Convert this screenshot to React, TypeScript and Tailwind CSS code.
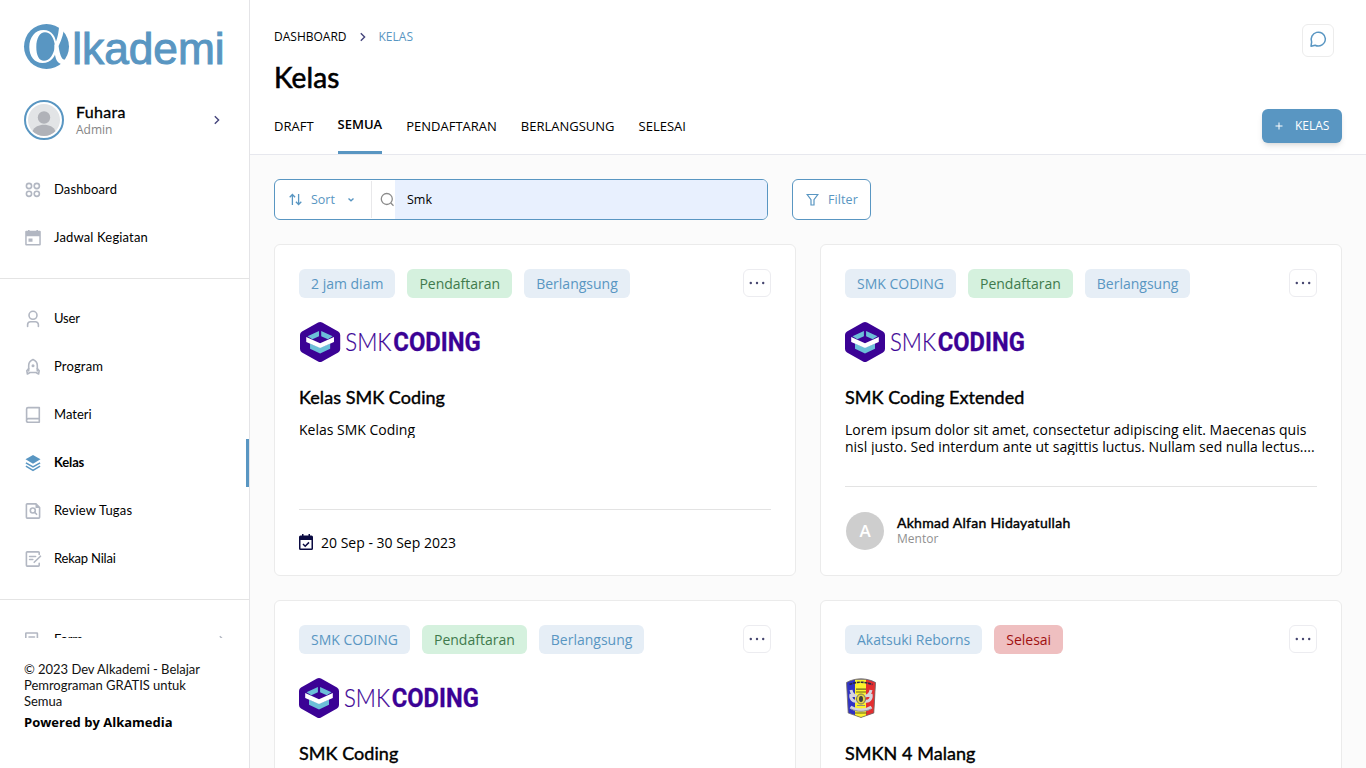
import React from "react";

const display = "font-['Lato',sans-serif]";

type IconProps = { className?: string };

const line = {
  fill: "none",
  stroke: "currentColor",
  strokeWidth: 1.6,
  strokeLinecap: "round" as const,
  strokeLinejoin: "round" as const,
};

function Svg16({ children, className }: { children: React.ReactNode; className?: string }) {
  return (
    <svg width="18" height="18" viewBox="0 0 18 18" className={className ?? "shrink-0"}>
      {children}
    </svg>
  );
}

const DashboardIcon = () => (
  <Svg16>
    <g {...line}>
      <circle cx="5" cy="5" r="2.6" />
      <circle cx="12.8" cy="5" r="2.6" />
      <circle cx="5" cy="12.8" r="2.6" />
      <circle cx="12.8" cy="12.8" r="2.6" />
    </g>
  </Svg16>
);

const CalendarIcon = () => (
  <Svg16>
    <path
      fill="currentColor"
      fillRule="evenodd"
      d="M1.2 2.8a1 1 0 0 1 1-1H4V1h1.6v.8h6.8V1H14v.8h1.8a1 1 0 0 1 1 1v12.7a1 1 0 0 1-1 1H2.200a1 1 0 0 1-1-1zM2.700 7.200v7.800h12.600v-7.800zM4.500 9.600h4v3.200h-4z"
    />
  </Svg16>
);

const UserIcon = () => (
  <Svg16>
    <g {...line}>
      <circle cx="9" cy="5.300" r="4" />
      <path d="M3.600 16.500v-1.700a3 3 0 0 1 3-3h4.800a3 3 0 0 1 3 3v1.700" />
    </g>
  </Svg16>
);

const RocketIcon = () => (
  <Svg16>
    <g {...line}>
      <path d="M4.700 13V7.500C4.700 4.600 6.600 2.500 9 1.500c2.400 1 4.300 3.100 4.300 6V13" />
      <path d="M4.700 10.600 2.800 12.700l.6 3.300 2.600-1.500h6l2.600 1.500.6-3.300-1.900-2.100" />
    </g>
    <circle cx="9" cy="7.700" r="1.500" fill="currentColor" />
  </Svg16>
);

const BookIcon = () => (
  <Svg16>
    <g {...line}>
      <path d="M2.600 14.300V3a1.400 1.400 0 0 1 1.400-1.400h11.300v14.600H4.300a1.800 1.800 0 0 1 0-3.600h11" />
    </g>
  </Svg16>
);

const LayersIcon = () => (
  <Svg16>
    <path d="M9 .9 16.500 5.300 9 9.700 1.500 5.300z" fill="currentColor" />
    <path d="M1.900 8.800 9 13l7.100-4.200M1.900 12.100 9 16.300l7.100-4.200" fill="none" stroke="currentColor" strokeWidth="1.500" />
  </Svg16>
);

const ReviewIcon = () => (
  <Svg16>
    <g {...line}>
      <path d="M12 1.900H3.200a.8.800 0 0 0-.8.8v12.600a.8.800 0 0 0 .8.8h11.600a.8.800 0 0 0 .8-.8V5.500z" />
      <circle cx="8.800" cy="8.500" r="2.500" />
      <path d="m10.700 10.400 1.900 1.900" />
    </g>
    <path d="M11.500 1.500v4.500h4.500z" fill="currentColor" />
  </Svg16>
);

const RecapIcon = () => (
  <Svg16>
    <g {...line}>
      <path d="M15.200 4.500V2.700a.8.800 0 0 0-.8-.8H3.200a.8.800 0 0 0-.8.8v12.600a.8.800 0 0 0 .8.8h11.200a.8.800 0 0 0 .8-.8v-2" />
      <path d="M5.600 6.500h6M5.600 9.500h3.200M10.200 12.300l6.300-6.100" />
    </g>
  </Svg16>
);

const FormIcon = () => (
  <Svg16>
    <g {...line}>
      <rect x="1.800" y="2" width="11.600" height="13.500" rx=".5" />
      <path d="M5 6h5.500M5 9h5.500" />
    </g>
  </Svg16>
);

function Chevron({ className }: IconProps) {
  return (
    <svg width="8" height="12" viewBox="0 0 8 12" className={className}>
      <path d="m1.800 2.200 3.800 3.800-3.800 3.800" fill="none" stroke="currentColor" strokeWidth="1.400" />
    </svg>
  );
}

function BrandLogo() {
  return (
    <svg width="202" height="46" viewBox="0 0 202 46" className="block overflow-visible">
      <circle cx="22.500" cy="22.500" r="22.500" fill="#5996c2" />
      <path
        fill="#fff"
        fillRule="evenodd"
        d="M19.500 6C28 6 32.500 13 32.500 22.500S27.500 39 18.500 39C10.500 39 5.300 32.500 5.300 23S11 6 19.500 6zM21 8.300c-5.200 0-8.700 6-8.700 14.700 0 8.500 2.700 13.800 7.700 13.800 5.500 0 9.800-6 11-14.800C30 13.500 26.500 8.300 21 8.300z"
      />
      <path
        fill="#fff"
        d="M35.300 0H40.500C40 8.500 38 15 34.600 22c.7 6 2.200 11.200 4.200 13 1.500 1.300 3 .8 4.500-.5L44 38l-6 2.200c-4.500-1-6.500-4.700-7.300-11.200l-.4-7.500C33.200 15.500 34.800 9 35.300 0z"
      />
      <text x="48.200" y="39.800" textLength="152.500" lengthAdjust="spacingAndGlyphs" fill="#5996c2" stroke="#5996c2" strokeWidth="1" className="font-['Liberation_Sans',sans-serif] text-[43.500px]">
        lkademi
      </text>
    </svg>
  );
}

function SmkLogo({ wide }: { wide?: boolean }) {
  return (
    <svg width={wide ? 181 : 180} height="40" viewBox="0 0 180 40" preserveAspectRatio="none" className={wide ? "ml-px block overflow-visible" : "block overflow-visible"}>
      <path d="M18 .6a4 4 0 0 1 4 0l16 9a4 4 0 0 1 2 3.500v14a4 4 0 0 1-2 3.500l-16 8.900a4 4 0 0 1-4 0l-16-8.900a4 4 0 0 1-2-3.500v-14a4 4 0 0 1 2-3.500z" fill="#3b0295" />
      <path d="M7.500 14.200 18.900 9v5.200L12.300 17.300zM32.500 14.200 21.100 9v5.200l6.600 3.100zM10 21.500l10 4 10-4v5.200L20 31.500l-10-4.800z" fill="#6cbfd8" />
      <path d="M6.200 15 20 21.200 33.800 15v5L20 26 6.200 20z" fill="#fff" />
      <text x="45" y="28.800" textLength="46" lengthAdjust="spacingAndGlyphs" fill="#3b0295" stroke="#3b0295" strokeWidth=".2" className="font-['Lato',sans-serif] text-[24.500px] font-light">
        SMK
      </text>
      <text x="92.800" y="28.800" textLength="87" lengthAdjust="spacingAndGlyphs" fill="#3b0295" stroke="#3b0295" strokeWidth=".3" className="font-['Roboto',sans-serif] text-[25px] font-bold">
        CODING
      </text>
    </svg>
  );
}

function SchoolCrest() {
  return (
    <svg width="32" height="40" viewBox="0 0 32 40" className="block">
      <path d="M1.500 4.500C6 2 11 .8 16 .8S26 2 30.500 4.500L28.800 35C24.500 36.500 20 38 16 39.500 12 38 7.500 36.500 3.200 35z" fill="#3033c4" />
      <path d="M10 1.500h11v36.200l-5 1.800-6-2z" fill="#fbf22d" />
      <path d="M21 1.500c3.300.6 6.500 1.600 9.500 3L28.800 35 21 37.700z" fill="#e42e30" />
      <path d="M4.500 6.500c7.500-3 15.500-3 23 0" fill="none" stroke="#292b45" strokeWidth="1.600" strokeDasharray="3 .8" />
      <path d="M6 12c1 5 3 6 6 6M26 12c-1 5-3 6-6 6M6 16c-1 5 2 8 6 7M26 16c1 5-2 8-6 7M5.500 29c6 4 15 4 21 0" fill="none" stroke="#d5d4dc" strokeWidth="3" />
      <path d="M11 11.200h10M11 14h10M10 35h12" stroke="#686321" strokeWidth="1.200" />
      <ellipse cx="16" cy="21" rx="4.500" ry="5" fill="#e4d546" stroke="#77745a" />
      <ellipse cx="16" cy="21" rx="2" ry="3" fill="#3d3f42" />
      <path d="M12 27.500h8M6 31c6 3 14 3 20 0" fill="none" stroke="#85838a" strokeWidth=".9" />
      <path d="M1.500 4.500C6 2 11 .8 16 .8S26 2 30.500 4.500L28.800 35C24.500 36.500 20 38 16 39.500 12 38 7.500 36.500 3.200 35z" fill="none" stroke="#777066" strokeWidth=".8" />
    </svg>
  );
}

function NavItem({ icon, label, spacing, active, arrow }: { icon: React.ReactNode; label: string; spacing: string; active?: boolean; arrow?: boolean }) {
  return (
    <a
      className={
        "flex h-12 shrink-0 items-center border-r-[3px] pl-6 " +
        (active ? "border-[#5996c2] text-[#5996c2]" : "border-transparent text-[#b2b7c2]")
      }
    >
      {icon}
      <span className={`ml-3 text-[13px] whitespace-nowrap text-black ${display} ${spacing} ${active ? "font-bold" : ""}`}>{label}</span>
      {arrow && <Chevron className="mr-[20px] ml-auto" />}
    </a>
  );
}

function Sidebar() {
  return (
    <aside className="flex h-full w-[250px] shrink-0 flex-col border-r border-[#e4e4e7] bg-white">
      <div className="h-[100px] shrink-0 pt-6 pl-6">
        <BrandLogo />
      </div>
      <div className="flex h-10 shrink-0 items-center pl-6">
        <svg width="40" height="40" viewBox="0 0 40 40" className="shrink-0">
          <circle cx="20" cy="20" r="19" fill="#fff" stroke="#5996c2" strokeWidth="2" />
          <circle cx="20" cy="20" r="16" fill="#e2e4e6" />
          <circle cx="20" cy="17.500" r="6.200" fill="#b0b2b8" />
          <path d="M8.600 31.200c3-8.500 19.800-8.500 22.800 0a16 16 0 0 1-22.800 0z" fill="#b0b2b8" />
        </svg>
        <div className="ml-3 pt-px">
          <div className={`text-[16px] leading-4 tracking-[0.3px] [-webkit-text-stroke:0.3px] ${display}`}>Fuhara</div>
          <div className="pt-[2px] text-[12px] leading-[16px] text-[#858585]">Admin</div>
        </div>
        <Chevron className="mr-[28px] ml-auto text-[#45457c]" />
      </div>
      <nav className="mt-[26px] flex h-[472px] shrink-0 flex-col overflow-hidden">
        <NavItem icon={<DashboardIcon />} label="Dashboard" spacing="tracking-[0.13px]" />
        <NavItem icon={<CalendarIcon />} label="Jadwal Kegiatan" spacing="tracking-[0.16px]" />
        <div className="mt-4 mb-4 h-px shrink-0 bg-[#e4e4e4]" />
        <NavItem icon={<UserIcon />} label="User" spacing="tracking-[-0.2px]" />
        <NavItem icon={<RocketIcon />} label="Program" spacing="tracking-[0.15px]" />
        <NavItem icon={<BookIcon />} label="Materi" spacing="tracking-[0px]" />
        <NavItem icon={<LayersIcon />} label="Kelas" spacing="tracking-[-0.15px]" active />
        <NavItem icon={<ReviewIcon />} label="Review Tugas" spacing="tracking-[0.15px]" />
        <NavItem icon={<RecapIcon />} label="Rekap Nilai" spacing="tracking-[-0.2px]" />
        <div className="mt-4 mb-4 h-px shrink-0 bg-[#e4e4e4]" />
        <NavItem icon={<FormIcon />} label="Form" spacing="tracking-[-0.2px]" arrow />
      </nav>
      <footer className="px-6 pt-[23px]">
        <p className={`text-[13px] leading-4 tracking-[-0.03px] text-[#111] ${display}`}>
          © 2023 Dev Alkademi - Belajar
          <br />
          Pemrograman GRATIS untuk
          <br />
          Semua
        </p>
        <p className="mt-[5px] text-[13px] leading-4 font-bold whitespace-nowrap">Powered by Alkamedia</p>
      </footer>
    </aside>
  );
}

function Header() {
  const tab = "flex items-center";
  return (
    <header className="flex h-[155px] shrink-0 justify-between border-b border-[#e7e8ee] bg-white pr-6 pl-6">
      <div className="flex flex-col">
        <div className="mt-[29px] flex h-4 items-center text-[12px]">
          <span>DASHBOARD</span>
          <Chevron className="mx-3 text-[#45457c]" />
          <span className="text-[#5996c2]">KELAS</span>
        </div>
        <h1 className={`mt-[14px] h-9 text-[28px] leading-9 tracking-[0.1px] [-webkit-text-stroke:0.6px] ${display}`}>Kelas</h1>
        <div className="mt-[5px] flex h-[54px] gap-6 text-[13px]">
          <a className={tab}>DRAFT</a>
          <a className="flex items-center border-b-[3px] border-[#5996c2] pb-px font-semibold">SEMUA</a>
          <a className={tab}>PENDAFTARAN</a>
          <a className={tab}>BERLANGSUNG</a>
          <a className={tab}>SELESAI</a>
        </div>
      </div>
      <div className="flex flex-col items-end">
        <button className="mt-6 mr-2 flex h-[33px] w-8 justify-center rounded-md border border-[#ececec] pt-[5px]">
          <svg width="18" height="18" viewBox="0 0 24 24">
            <path
              d="M21.800 11.500a9.500 9.700 0 0 1-13.600 8.800L2.700 21.600 3.500 16.100A9.500 9.700 0 1 1 21.800 11.500z"
              fill="none"
              stroke="#5996c2"
              strokeWidth="2"
              strokeLinejoin="round"
            />
          </svg>
        </button>
        <button className="mt-[52px] flex h-[34px] w-20 items-center rounded-md bg-[#5996c2] pl-[13px] text-[12px] text-white shadow-md">
          <svg width="8" height="8" viewBox="0 0 8 8" className="mr-3">
            <path d="M4 .5v7M.5 4h7" stroke="#fff" strokeWidth="1" />
          </svg>
          KELAS
        </button>
      </div>
    </header>
  );
}

function Toolbar() {
  return (
    <div className="flex h-[41px] gap-6 text-[12.500px] leading-5 text-[#5996c2]">
      <div className="flex w-[494px] overflow-hidden rounded-md border border-[#5996c2] bg-white">
        <div className="my-px flex w-[97px] items-center border-r border-[#e8e8ea] pl-[14px]">
          <svg width="13" height="13" viewBox="0 0 13 13" className="mr-[9px]">
            <path d="M3.400 12V1.500M.7 4.200l2.700-2.700 2.700 2.700M9.600 1v10.500M6.900 8.800l2.700 2.700 2.700-2.700" fill="none" stroke="currentColor" strokeWidth="1.300" />
          </svg>
          <span className="pt-px">Sort</span>
          <svg width="8" height="6" viewBox="0 0 8 6" className="ml-3">
            <path d="m1.500 1.500 2.500 2.300 2.500-2.300" fill="none" stroke="currentColor" strokeWidth="1.400" />
          </svg>
        </div>
        <div className="flex w-[23px] items-center pl-2">
          <svg width="15" height="15" viewBox="0 0 15 15" className="shrink-0">
            <circle cx="6.800" cy="7" r="5.500" fill="none" stroke="#8b8b8b" strokeWidth="1.300" />
            <path d="m10.800 11 2.700 2.700" stroke="#8b8b8b" strokeWidth="1.300" />
          </svg>
        </div>
        <div className="flex flex-1 items-center bg-[#e8f0fe] pt-px pl-3 text-black">Smk</div>
      </div>
      <button className="flex w-[79px] items-center rounded-md border border-[#5996c2] bg-white pl-[13px]">
        <svg width="13" height="13" viewBox="0 0 13 13" className="mr-[9px]">
          <path d="M1.200 1.500h10.600L8 6.700V12H5V6.700z" fill="none" stroke="currentColor" strokeWidth="1.200" />
        </svg>
        <span className="pt-px tracking-[0.1px]">Filter</span>
      </button>
    </div>
  );
}

const tones = {
  blue: "bg-[#e6eef6] text-[#5996c2]",
  green: "bg-[#d5f1de] text-[#3f7a4c]",
  red: "bg-[#efbfc0] text-[#a01010]",
};

type Card = {
  tags: [string, keyof typeof tones][];
  logo: React.ReactNode;
  title: string;
  desc?: React.ReactNode;
  footer?: React.ReactNode;
};

function ClassCard({ tags, logo, title, desc, footer }: Card) {
  return (
    <article className="flex h-[332px] flex-col rounded-md border border-[#ebebeb] bg-white p-6">
      <div className="flex items-start justify-between">
        <div className="flex gap-3">
          {tags.map(([label, tone]) => (
            <span key={label} className={`h-[29px] rounded-md px-3 text-[14px] leading-[29px] whitespace-nowrap ${tones[tone]}`}>
              {label}
            </span>
          ))}
        </div>
        <button className="flex h-7 w-7 items-center justify-center rounded-md border border-[#ececf0]">
          <svg width="16" height="4" viewBox="0 0 16 4" fill="#46466f">
            <circle cx="1.800" cy="2" r="1.200" />
            <circle cx="8" cy="2" r="1.200" />
            <circle cx="14.200" cy="2" r="1.200" />
          </svg>
        </button>
      </div>
      <div className="mt-6 h-10">{logo}</div>
      <h2 className={`mt-[23px] text-[18px] leading-6 tracking-[0.05px] [-webkit-text-stroke:0.4px] ${display}`}>{title}</h2>
      <div className="mt-3 overflow-hidden text-[14px] leading-[17px] whitespace-nowrap">{desc}</div>
      {footer && <div className="mt-auto border-t border-[#e3e3e3] pt-6">{footer}</div>}
    </article>
  );
}

const cards: Card[] = [
  {
    tags: [["2 jam diam", "blue"], ["Pendaftaran", "green"], ["Berlangsung", "blue"]],
    logo: <SmkLogo wide />,
    title: "Kelas SMK Coding",
    desc: "Kelas SMK Coding",
    footer: (
      <div className="flex h-[17px] items-center text-[14px]">
        <svg width="14" height="16" viewBox="0 0 14 16" className="mr-2 mb-px">
          <path
            fill="#0b0b42"
            fillRule="evenodd"
            d="M3 0h1.500v1.500h5V0H11v1.500h1.500A1.500 1.500 0 0 1 14 3v11.500a1.500 1.500 0 0 1-1.500 1.500h-11A1.500 1.500 0 0 1 0 14.500V3a1.500 1.500 0 0 1 1.500-1.500H3zM1.500 6v8.500h11V6z"
          />
          <path d="m4 10 2.200 2.200L10 8.400" fill="none" stroke="#0b0b42" strokeWidth="1.500" />
        </svg>
        20 Sep - 30 Sep 2023
      </div>
    ),
  },
  {
    tags: [["SMK CODING", "blue"], ["Pendaftaran", "green"], ["Berlangsung", "blue"]],
    logo: <SmkLogo />,
    title: "SMK Coding Extended",
    desc: (
      <>
        Lorem ipsum dolor sit amet, consectetur adipiscing elit. Maecenas quis
        <br />
        nisl justo. Sed interdum ante ut sagittis luctus. Nullam sed nulla lectus....
      </>
    ),
    footer: (
      <div className="flex h-10 items-center">
        <div className="ml-px flex h-[38px] w-[38px] items-center justify-center rounded-full bg-[#cecece] text-[17px] font-semibold text-white">A</div>
        <div className="mb-[2px] ml-[13px]">
          <div className={`text-[14px] leading-4 tracking-[0.28px] [-webkit-text-stroke:0.4px] ${display}`}>Akhmad Alfan Hidayatullah</div>
          <div className="text-[12px] leading-[15px] text-[#909090]">Mentor</div>
        </div>
      </div>
    ),
  },
  {
    tags: [["SMK CODING", "blue"], ["Pendaftaran", "green"], ["Berlangsung", "blue"]],
    logo: <SmkLogo />,
    title: "SMK Coding",
  },
  {
    tags: [["Akatsuki Reborns", "blue"], ["Selesai", "red"]],
    logo: <SchoolCrest />,
    title: "SMKN 4 Malang",
  },
];

export default function App() {
  return (
    <div className="flex h-screen w-full overflow-hidden bg-[#fbfbfb] font-['Open_Sans','Noto_Sans',sans-serif] text-black">
      <Sidebar />
      <main className="flex min-w-0 flex-1 flex-col overflow-hidden">
        <Header />
        <div className="flex flex-col gap-6 p-6">
          <Toolbar />
          <section className="grid grid-cols-2 gap-6">
            {cards.map((card) => (
              <ClassCard key={card.title} {...card} />
            ))}
          </section>
        </div>
      </main>
    </div>
  );
}
